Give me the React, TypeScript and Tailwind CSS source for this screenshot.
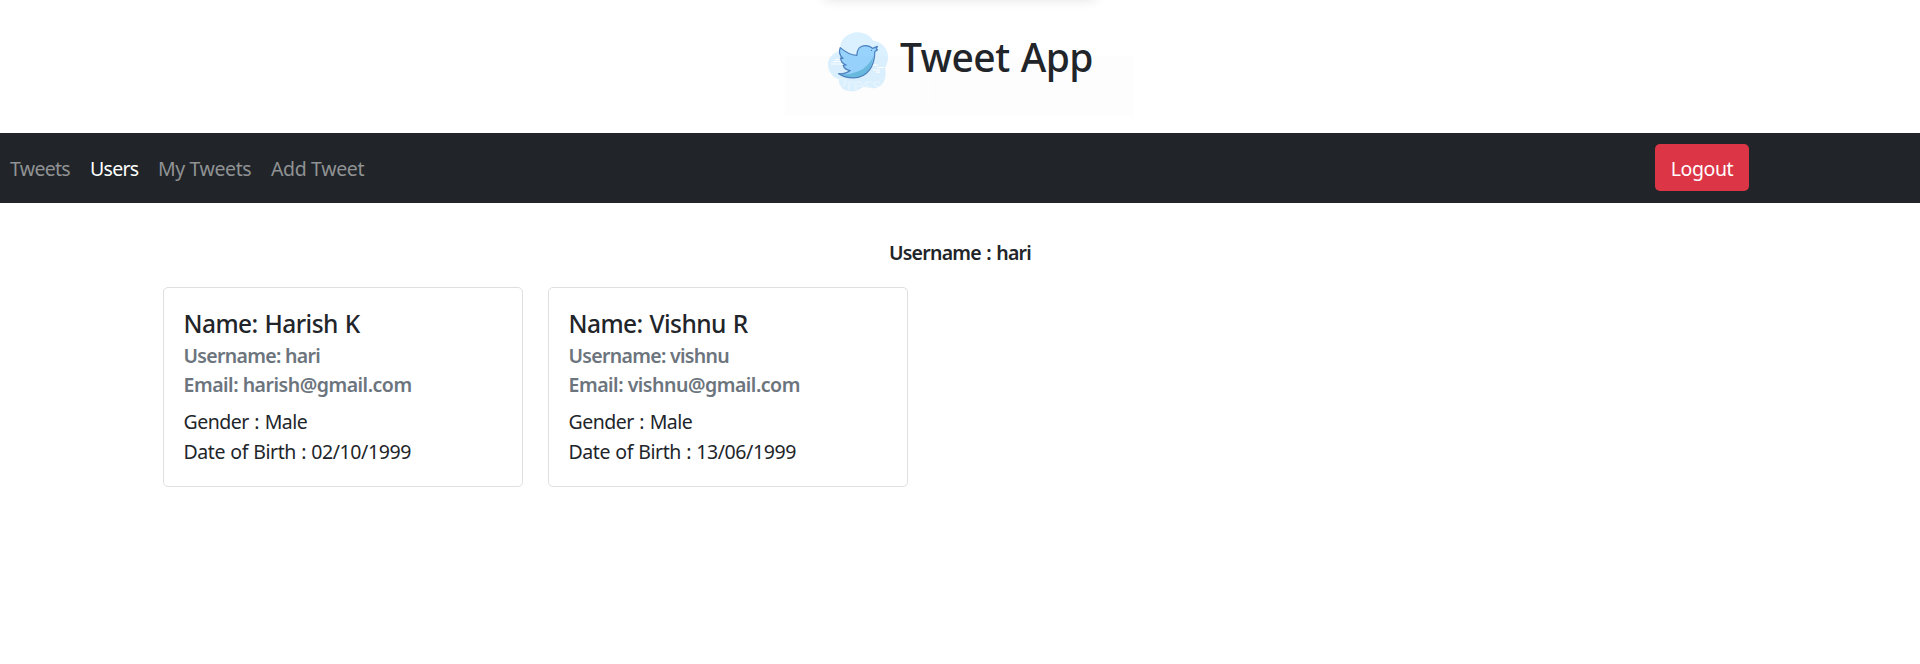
type User = { name: string; username: string; email: string; gender: string; dob: string };

const users: User[] = [
  { name: "Harish K", username: "hari", email: "harish@gmail.com", gender: "Male", dob: "02/10/1999" },
  { name: "Vishnu R", username: "vishnu", email: "vishnu@gmail.com", gender: "Male", dob: "13/06/1999" },
];

const links = [
  { label: "Tweets", width: "w-[60px] tracking-[-0.7px]", active: false },
  { label: "Users", width: "w-[48px] tracking-[-0.7px]", active: true },
  { label: "My Tweets", width: "w-[93px] tracking-[-0.4px]", active: false },
  { label: "Add Tweet", width: "w-[94px] tracking-[-0.35px]", active: false },
];

function BirdLogo() {
  return (
    <svg viewBox="0 0 60 60" className="h-[60px] w-[60px] shrink-0" aria-hidden="true">
      <path
        d="M12.2 16C12.2 7 20 0.2 29.5 0.2C37.5 0.2 42.5 4 45.2 8.8C53.5 9.6 60 16.6 60 24.4C60 30 58.7 33 56.8 36C59.5 44 56 55.2 46.3 56.2C41.5 56.8 39.5 54.7 36.5 54.9C32 55.5 30.5 59.2 24 59.2C16 59.2 10.8 55.5 10.5 47.4C4.5 45 0 39.5 0 32.6C0 25.5 4.7 20.8 12.8 18.5C12.3 17.6 12.2 17 12.2 16Z"
        fill="#dbf1ff"
      />
      <g stroke="#fff" strokeWidth="1.2">
        <path d="M7 27.5H11M5 29.5H15M3 32H9M10 32H16M44 33H50M49 35.5H56M45 38H52M48 40.2H52" />
      </g>
      <path
        d="M12.2 15.6C15.5 18.5 22 23 28.8 23.4C28.8 17.5 32 13.5 37.5 13.5C40.5 13.5 43 14.8 44.6 16.4L49.4 14.4L48.2 16.8L49.5 17.8L46.8 19.8C46.8 34 39.3 45.8 25.5 45.8C19.5 45.8 14.5 44.4 10.6 41.7C15 42 19.4 40.8 22.2 38.5C18.6 38.2 16 36 15.2 33.3L18.2 33C14.8 31.8 12.6 29.2 12.6 26.1L15 26.4C11.4 23.3 11 19 12.2 15.6Z"
        fill="#98d3fd"
      />
      <path
        d="M45.2 25C43.6 37.7 36.5 45.8 25.5 45.8C19.5 45.8 14.5 44.4 10.6 41.7C15 42.6 21 42.6 26 40.8C34.5 38.6 40.5 33.7 45.2 25Z"
        fill="#6abbe0"
      />
      <path
        d="M12.2 15.6C15.5 18.5 22 23 28.8 23.4C28.8 17.5 32 13.5 37.5 13.5C40.5 13.5 43 14.8 44.6 16.4L49.4 14.4L48.2 16.8L49.5 17.8L46.8 19.8C46.8 34 39.3 45.8 25.5 45.8C19.5 45.8 14.5 44.4 10.6 41.7C15 42 19.4 40.8 22.2 38.5C18.6 38.2 16 36 15.2 33.3L18.2 33C14.8 31.8 12.6 29.2 12.6 26.1L15 26.4C11.4 23.3 11 19 12.2 15.6Z"
        fill="none"
        stroke="#4c82bf"
        strokeWidth="1.25"
        strokeLinejoin="round"
      />
      <circle cx="43.5" cy="18.4" r="0.7" fill="#4c82bf" />
    </svg>
  );
}

function FullScreenHint() {
  return (
    <div className="pointer-events-none absolute left-[785px] top-[56px] flex h-[60px] w-[349px] items-center bg-black/[0.008] pl-[50px] text-[20px] font-medium text-white/30">
      <span className="w-[54px] pb-[2px] tracking-[-1.2px]">Press</span>
      <span className="flex h-[40px] w-[40px] items-center justify-center border border-white/60 tracking-[-1px]">F11</span>
      <span className="ml-[9px] whitespace-nowrap pb-[2px] tracking-[-1.1px]">to exit full screen</span>
    </div>
  );
}

function UserCard({ user }: { user: User }) {
  return (
    <article className="h-[200px] w-[360px] whitespace-nowrap rounded-[5px] border border-[#dfdfdf] bg-white pl-[19.5px] pt-[18px]">
      <h5 className="h-[35px] text-[24.5px] font-medium leading-[36px] tracking-[-0.55px] [word-spacing:1px]">Name: {user.name}</h5>
      <h6 className="h-[29px] text-[19.5px] font-semibold leading-[29px] tracking-[-0.7px] text-[#6c757d]">
        Username: {user.username}
      </h6>
      <h6 className="h-[37px] text-[19.5px] font-semibold leading-[29px] tracking-[-0.48px] text-[#6c757d]">
        Email: {user.email}
      </h6>
      <p className="text-[19.5px] leading-[30px] tracking-[-0.5px] [word-spacing:1px]">Gender : {user.gender}</p>
      <p className="text-[19.5px] leading-[30px] tracking-[-0.4px] [word-spacing:0.5px]">Date of Birth : {user.dob}</p>
    </article>
  );
}

export default function App() {
  return (
    <div className="relative h-[664px] w-full overflow-hidden bg-white font-['Noto_Sans','Open_Sans',sans-serif] text-[#212529]">
      <div className="pointer-events-none absolute -top-5 left-[824px] h-5 w-[272px] shadow-[0_0_12px_rgba(0,0,0,0.11)]" />
      <header className="flex h-[133px] items-start pl-[828px] pt-[32px]">
        <BirdLogo />
        <h1 className="relative z-10 ml-[12px] whitespace-nowrap text-[39px] font-medium leading-[50px] tracking-[-0.55px] [word-spacing:1.5px]">
          Tweet App
        </h1>
      </header>
      <FullScreenHint />
      <nav className="flex h-[70px] items-start justify-between bg-[#212529] pl-[10px] pr-[171px] pt-[11px] text-[19.5px]">
        <div className="flex gap-5 pt-[10px] leading-[29px]">
          {links.map((link) => (
            <a key={link.label} href="#" className={`${link.width} whitespace-nowrap ${link.active ? "text-white" : "text-[#909294]"}`}>
              {link.label}
            </a>
          ))}
        </div>
        <button className="h-[47px] w-[94px] rounded-[5px] bg-[#dc3545] pt-[2px] tracking-[-0.4px] text-white">Logout</button>
      </nav>
      <main>
        <h6 className="pt-[35px] text-center text-[19.5px] font-semibold leading-[30px] tracking-[-0.75px] [word-spacing:1px]">
          Username : hari
        </h6>
        <div className="mt-[19px] flex gap-[25px] pl-[163px]">
          {users.map((user) => (
            <UserCard key={user.username} user={user} />
          ))}
        </div>
      </main>
    </div>
  );
}
